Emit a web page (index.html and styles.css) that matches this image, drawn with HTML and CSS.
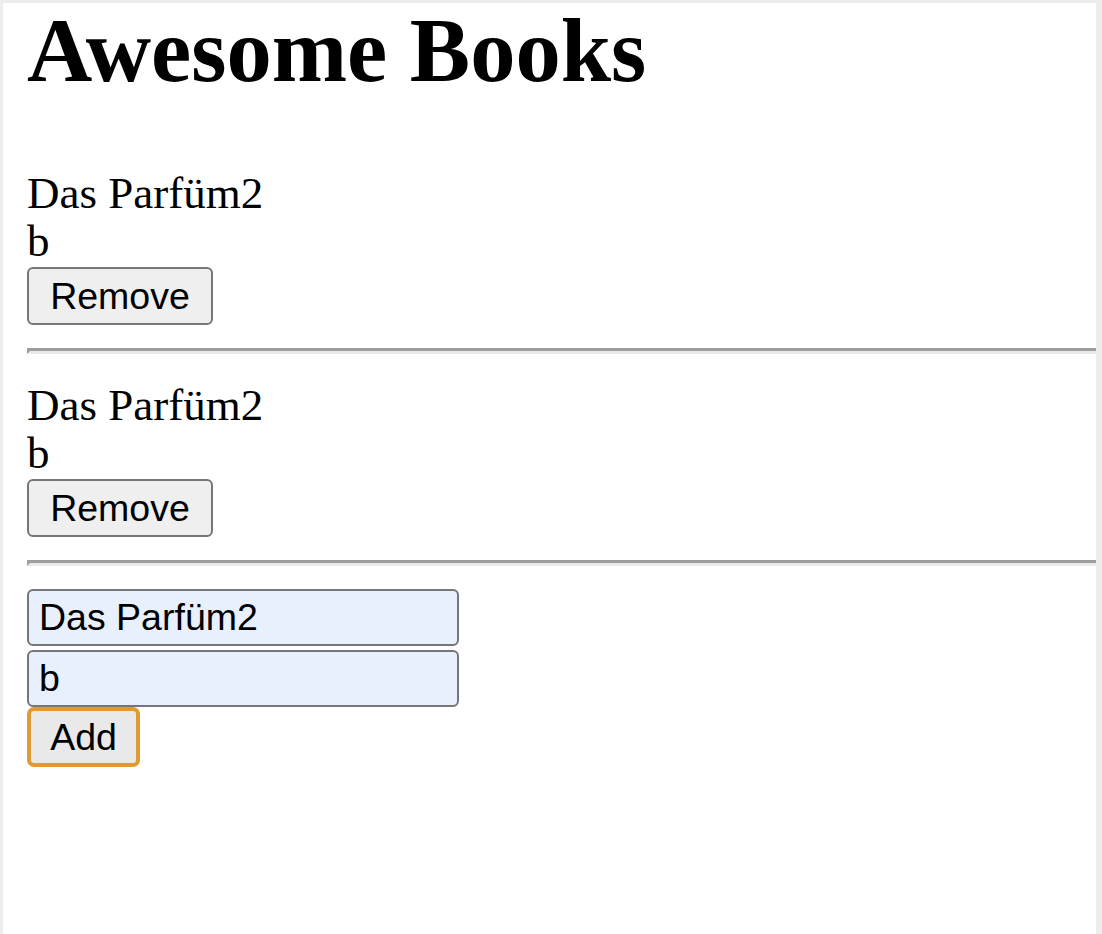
FILE: index.html
```html
<!DOCTYPE html>
<html lang="en">
<head>
<meta charset="utf-8">
<title>Awesome Books</title>
<link rel="stylesheet" href="styles.css">
</head>
<body>
  <h1 class="title">Awesome Books</h1>
  <section class="books">
    <div class="book">
      <p class="book-line">Das Parfüm2</p>
      <p class="book-line">b</p>
      <button class="btn remove" type="button">Remove</button>
      <hr class="sep">
    </div>
    <div class="book">
      <p class="book-line">Das Parfüm2</p>
      <p class="book-line">b</p>
      <button class="btn remove" type="button">Remove</button>
      <hr class="sep">
    </div>
  </section>
  <form class="add-form">
    <input class="field" type="text" value="Das Parfüm2">
    <input class="field" type="text" value="b">
    <button class="btn add" type="button">Add</button>
  </form>
</body>
</html>
```

FILE: styles.css
```css
html {
  margin: 0;
  background: #ededed;
  height: 100%;
}
body {
  margin: 3px 6px 0 3px;
  padding: 0 0 0 24px;
  background: #ffffff;
  min-height: 931px;
  box-sizing: border-box;
  overflow: hidden;
  font-family: "Liberation Serif", "Times New Roman", serif;
  color: #000;
}
.title {
  margin: 3px 0 0;
  font-size: 90.5px;
  line-height: 90px;
  font-weight: bold;
}
.books {
  margin-top: 73px;
}
.book-line {
  margin: 0;
  font-size: 45px;
  line-height: 48px;
}
.btn {
  display: block;
  font-family: "Liberation Sans", Arial, sans-serif;
  font-size: 37.5px;
  color: #000;
  border-radius: 6px;
  padding: 0;
  box-sizing: border-box;
}
.remove {
  margin-top: 2px;
  width: 186px;
  height: 58px;
  background: #efefef;
  border: 2px solid #767676;
}
.sep {
  margin: 23px 0 27px;
  height: 0;
  border-style: solid;
  border-width: 3px 0 3px 3px;
  border-color: #9e9e9e #eaeaea #eaeaea #9e9e9e;
}
.book:last-child .sep {
  margin-bottom: 23px;
}
.add-form {
  display: flex;
  flex-direction: column;
  align-items: flex-start;
  gap: 4px;
}
.field {
  width: 432px;
  height: 57px;
  box-sizing: border-box;
  margin: 0;
  padding: 0 10px;
  border: 2px solid #767676;
  border-radius: 6px;
  background: #e8f0fe;
  font-family: "Liberation Sans", Arial, sans-serif;
  font-size: 37.5px;
  color: #000;
}
.add {
  margin-top: -4px;
  width: 113px;
  height: 60px;
  background: #e9e9e9;
  border: 4px solid #e09a35;
  border-radius: 7px;
}
```
